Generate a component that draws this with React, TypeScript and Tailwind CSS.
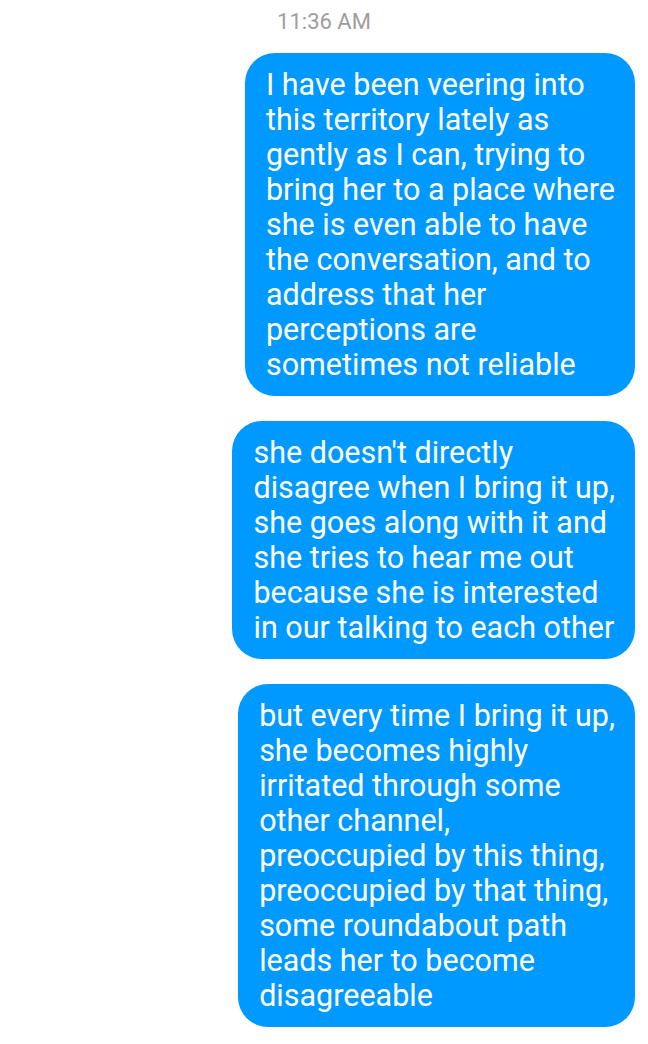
import React from "react";

const messages: string[][] = [
  [
    "I have been veering into",
    "this territory lately as",
    "gently as I can, trying to",
    "bring her to a place where",
    "she is even able to have",
    "the conversation, and to",
    "address that her",
    "perceptions are",
    "sometimes not reliable",
  ],
  [
    "she doesn't directly",
    "disagree when I bring it up,",
    "she goes along with it and",
    "she tries to hear me out",
    "because she is interested",
    "in our talking to each other",
  ],
  [
    "but every time I bring it up,",
    "she becomes highly",
    "irritated through some",
    "other channel,",
    "preoccupied by this thing,",
    "preoccupied by that thing,",
    "some roundabout path",
    "leads her to become",
    "disagreeable",
  ],
];

const Bubble: React.FC<{ lines: string[] }> = ({ lines }) => {
  return (
    <div className="bg-[#0099ff] text-white rounded-[30px] pl-[21px] pr-[20px] pt-[14px] pb-[14px] text-[30.5px] leading-[35px]">
      {lines.map((line, i) => (
        <div key={i} className="whitespace-nowrap">
          {line}
        </div>
      ))}
    </div>
  );
};

export default function App() {
  return (
    <div
      className="w-[648px] min-h-[1044px] bg-white pt-[8px]"
      style={{ fontFamily: "Roboto, 'Liberation Sans', sans-serif" }}
    >
      <div className="text-center text-[22px] leading-[28px] text-[#9e9e9e]">
        11:36 AM
      </div>
      <div className="mt-[17px] flex flex-col items-end gap-[25px] pr-[13px]">
        {messages.map((m, i) => (
          <Bubble key={i} lines={m} />
        ))}
      </div>
    </div>
  );
}
